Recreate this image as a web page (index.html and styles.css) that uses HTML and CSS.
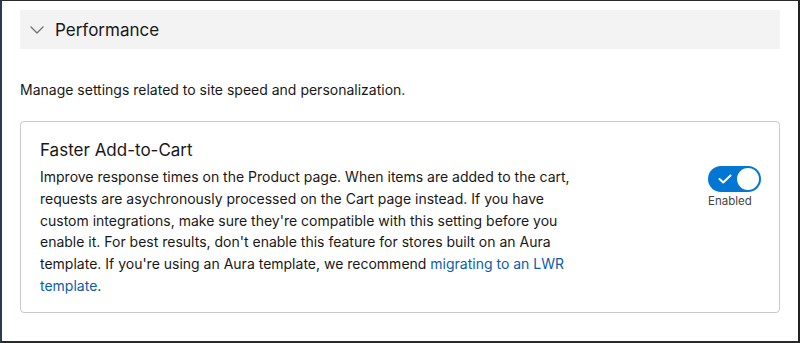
FILE: index.html
```html
<!DOCTYPE html>
<html lang="en">
<head>
<meta charset="utf-8">
<title>Performance</title>
<link rel="stylesheet" href="styles.css">
</head>
<body>
<div class="frame">
  <div class="section-header">
    <svg class="chevron" width="14" height="8" viewBox="0 0 14 8" aria-hidden="true">
      <path d="M1 1 L7 7 L13 1" fill="none" stroke="#747474" stroke-width="1.4" stroke-linecap="round" stroke-linejoin="round"/>
    </svg>
    <span class="section-title">Performance</span>
  </div>
  <p class="section-desc">Manage settings related to site speed and personalization.</p>
  <div class="card">
    <div class="card-body">
      <h3 class="card-title">Faster Add-to-Cart</h3>
      <p class="card-text">Improve response times on the Product page. When items are added to the cart,<br>requests are asychronously processed on the Cart page instead. If you have<br>custom integrations, make sure they're compatible with this setting before you<br>enable it. For best results, don't enable this feature for stores built on an Aura<br>template. If you're using an Aura template, we recommend <a href="#" class="link">migrating to an LWR<br>template</a>.</p>
    </div>
    <div class="toggle-wrap">
      <div class="toggle">
        <svg class="check" width="14" height="10" viewBox="0 0 14 10" aria-hidden="true">
          <path d="M1.5 5 L5.2 8.5 L12.5 1.5" fill="none" stroke="#fff" stroke-width="2" stroke-linecap="round" stroke-linejoin="round"/>
        </svg>
        <span class="knob"></span>
      </div>
      <span class="toggle-label">Enabled</span>
    </div>
  </div>
</div>
</body>
</html>
```
FILE: styles.css
```css
* { box-sizing: border-box; }
html, body { margin: 0; padding: 0; background: #fff; }
body {
  font-family: Inter, "Liberation Sans", Arial, sans-serif;
  color: #181818;
}
.frame {
  width: 800px;
  height: 343px;
  border-top: 1px solid #2a2a2a;
  border-left: 2px solid #2c3b4b;
  border-right: 2px solid #222;
  border-bottom: 2px solid #2a2a2a;
  padding: 9px 18px 0 18px;
  overflow: hidden;
}
.section-header {
  display: flex;
  align-items: center;
  height: 39px;
  background: #f3f3f3;
  padding-left: 10px;
}
.chevron { margin-right: 11px; }
.section-title {
  font-size: 17px;
  color: #181818;
}
.section-desc {
  margin: 31px 0 0 0;
  font-size: 14px;
  line-height: 20px;
}
.card {
  margin-top: 21px;
  border: 1px solid #c9c9c9;
  border-radius: 4px;
  display: flex;
  justify-content: space-between;
  padding: 16px 19px 19px 19px;
  height: 192px;
}
.card-body { width: 590px; flex-shrink: 0; }
.card-title {
  margin: 0;
  font-size: 17px;
  font-weight: normal;
  line-height: 24px;
}
.card-text {
  margin: 4px 0 0 0;
  font-size: 14px;
  line-height: 21.8px;
}
.link { color: #0b5cab; text-decoration: none; }
.toggle-wrap {
  display: flex;
  flex-direction: column;
  align-items: flex-start;
  margin-top: 28px;
  margin-right: -1px;
}
.toggle {
  width: 53px;
  height: 26px;
  border-radius: 13px;
  background: #0176d3;
  display: flex;
  align-items: center;
  justify-content: space-between;
  padding: 0 2px 0 10px;
}
.knob {
  width: 22px;
  height: 22px;
  border-radius: 50%;
  background: #fff;
}
.toggle-label {
  font-size: 11.5px;
  color: #444;
  margin-top: 2px;
}
```
